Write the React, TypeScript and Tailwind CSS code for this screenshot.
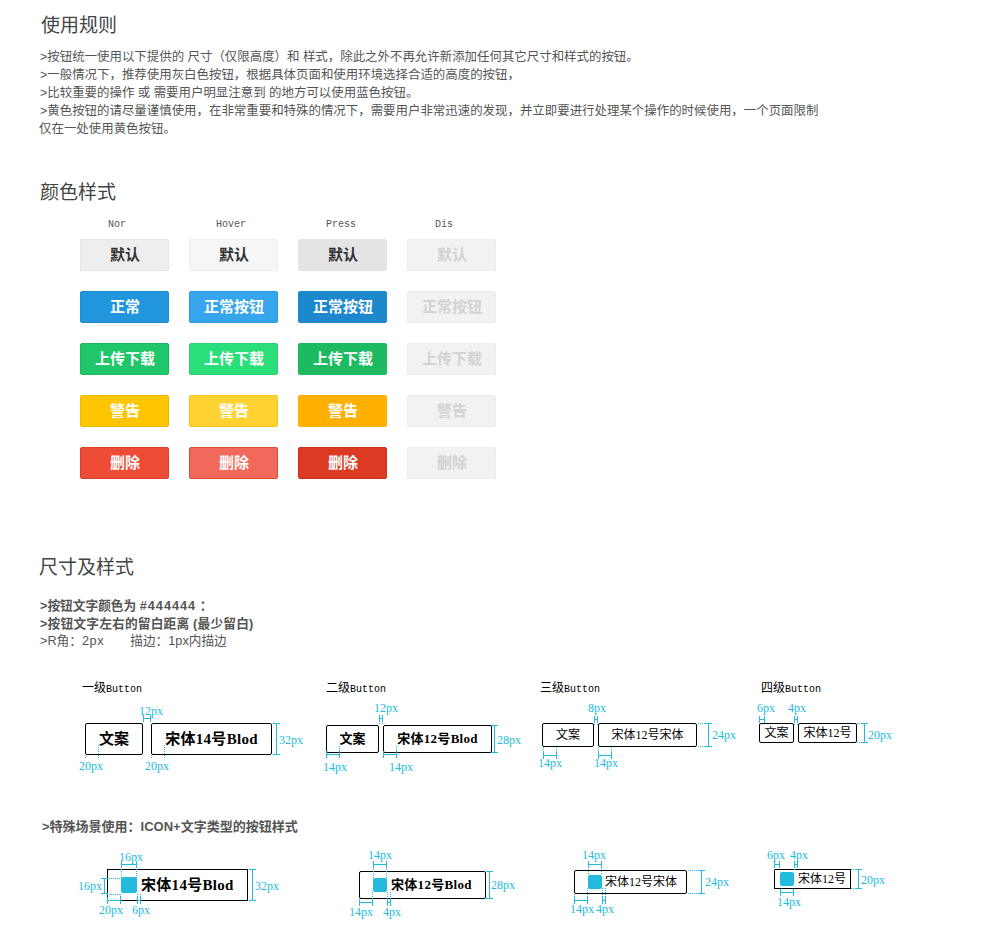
const SANS = "font-['Liberation_Sans','Noto_Sans_CJK_SC',sans-serif]";
const SPEC = "font-['Liberation_Serif','Noto_Sans_CJK_SC',serif]";

const DIS = "bg-[#f2f2f2] border-[#ececec] text-[#d2d2d2]";

const ROWS = [
  {
    text: ["默认", "默认", "默认", "默认"],
    cls: [
      "bg-[#eeeeee] border-[#e5e5e5] text-[#333333]",
      "bg-[#f6f6f6] border-[#eeeeee] text-[#333333]",
      "bg-[#e4e4e4] border-[#e4e4e4] text-[#333333]",
    ],
  },
  {
    text: ["正常", "正常按钮", "正常按钮", "正常按钮"],
    cls: [
      "bg-[#2196dc] border-[#1e8bcc] text-white",
      "bg-[#37a5ec] border-[#2f98da] text-white",
      "bg-[#1e88cd] border-[#1e88cd] text-white",
    ],
  },
  {
    text: ["上传下载", "上传下载", "上传下载", "上传下载"],
    cls: [
      "bg-[#1fc76a] border-[#1bb55f] text-white",
      "bg-[#2adf7a] border-[#2ad070] text-white",
      "bg-[#1dba62] border-[#1dba62] text-white",
    ],
  },
  {
    text: ["警告", "警告", "警告", "警告"],
    cls: [
      "bg-[#ffc600] border-[#f0b800] text-white",
      "bg-[#ffd233] border-[#f8c41a] text-white",
      "bg-[#ffb000] border-[#ffb000] text-white",
    ],
  },
  {
    text: ["删除", "删除", "删除", "删除"],
    cls: [
      "bg-[#ee4c36] border-[#d93f2b] text-white",
      "bg-[#f0695a] border-[#dc4a3c] text-white",
      "bg-[#dc3a23] border-[#cc3320] text-white",
    ],
  },
];

// cyan size labels on the spec drawings: [text, left, top]
const DIMS: [string, string][] = [
  ["12px", "left-[139px] top-[704px]"],
  ["20px", "left-[79px] top-[759px]"],
  ["20px", "left-[145px] top-[759px]"],
  ["32px", "left-[279px] top-[733px]"],
  ["12px", "left-[374px] top-[701px]"],
  ["14px", "left-[323px] top-[760px]"],
  ["14px", "left-[389px] top-[760px]"],
  ["28px", "left-[497px] top-[733px]"],
  ["8px", "left-[588px] top-[701px]"],
  ["14px", "left-[538px] top-[756px]"],
  ["14px", "left-[594px] top-[756px]"],
  ["24px", "left-[712px] top-[728px]"],
  ["6px", "left-[757px] top-[701px]"],
  ["4px", "left-[788px] top-[701px]"],
  ["20px", "left-[868px] top-[728px]"],
  ["16px", "left-[119px] top-[850px]"],
  ["16px", "left-[78px] top-[879px]"],
  ["20px", "left-[99px] top-[903px]"],
  ["6px", "left-[132px] top-[903px]"],
  ["32px", "left-[255px] top-[879px]"],
  ["14px", "left-[368px] top-[848px]"],
  ["14px", "left-[349px] top-[905px]"],
  ["4px", "left-[383px] top-[905px]"],
  ["28px", "left-[491px] top-[878px]"],
  ["14px", "left-[582px] top-[848px]"],
  ["14px", "left-[570px] top-[902px]"],
  ["4px", "left-[596px] top-[902px]"],
  ["24px", "left-[705px] top-[875px]"],
  ["6px", "left-[767px] top-[848px]"],
  ["4px", "left-[790px] top-[848px]"],
  ["14px", "left-[777px] top-[895px]"],
  ["20px", "left-[861px] top-[873px]"],
];

function Title({ children, className }: { children: string; className: string }) {
  return <h2 className={`text-[19px] leading-[24px] font-normal text-[#444444] ${className}`}>{children}</h2>;
}

function ColorTable() {
  return (
    <div className="ml-[80px] mt-[8px] flex flex-col gap-[20px]">
      {ROWS.map((row, r) => (
        <div key={r} className="flex gap-[20px]">
          {row.text.map((t, i) => (
            <div
              key={i}
              className={`w-[89px] h-[32px] rounded-[2px] border flex items-center justify-center pt-px pl-px text-[15px] font-bold ${
                i === 3 ? DIS : row.cls[i]
              }`}
            >
              {t}
            </div>
          ))}
        </div>
      ))}
    </div>
  );
}

function SpecBtn({ className, children }: { className: string; children: React.ReactNode }) {
  return (
    <div className={`rounded-[2px] border border-black flex items-center justify-center shrink-0 text-black ${SPEC} ${className}`}>
      {children}
    </div>
  );
}

function Level({ label }: { label: string }) {
  return (
    <div className="h-[12px] text-[10px] leading-[12px] text-black whitespace-nowrap">
      <span className={`text-[12px] ${SANS}`}>{label}</span>
      <span className="font-['Liberation_Mono',monospace]">Button</span>
    </div>
  );
}

function H({ x1, x2, y }: { x1: number; x2: number; y: number }) {
  return <path d={`M${x1} ${y + 0.5}H${x2}M${x1 + 0.5} ${y - 3}V${y + 4}M${x2 - 0.5} ${y - 3}V${y + 4}`} />;
}

function V({ x, y1, y2 }: { x: number; y1: number; y2: number }) {
  return <path d={`M${x + 0.5} ${y1}V${y2}M${x - 3} ${y1 + 0.5}H${x + 4}M${x - 3} ${y2 - 0.5}H${x + 4}`} />;
}

function DotV({ x, y1, y2 }: { x: number; y1: number; y2: number }) {
  return <path strokeDasharray="1 1" d={`M${x + 0.5} ${y1}V${y2}`} />;
}

function DotH({ x1, x2, y }: { x1: number; x2: number; y: number }) {
  return <path strokeDasharray="1 1" d={`M${x1} ${y + 0.5}H${x2}`} />;
}

function Measures() {
  return (
    <svg
      className="absolute top-0 left-0 w-[1000px] h-[932px] pointer-events-none"
      viewBox="0 0 1000 932"
      fill="none"
      stroke="#22bbdd"
      strokeWidth="1"
      shapeRendering="crispEdges"
    >
      {/* plain buttons */}
      <H x1={143} x2={151} y={718} />
      <DotV x={85} y1={755} y2={758} />
      <DotV x={98} y1={745} y2={758} />
      <DotV x={151} y1={755} y2={758} />
      <DotV x={164} y1={745} y2={758} />
      <V x={276} y1={723} y2={755} />
      <H x1={379} x2={383} y={718} />
      <DotV x={379} y1={721} y2={725} />
      <DotV x={382} y1={721} y2={725} />
      <H x1={326} x2={340} y={754} />
      <DotV x={339} y1={746} y2={754} />
      <H x1={383} x2={397} y={754} />
      <DotV x={396} y1={746} y2={754} />
      <V x={494} y1={725} y2={753} />
      <H x1={594} x2={598} y={719} />
      <DotV x={594} y1={722} y2={725} />
      <DotV x={597} y1={722} y2={725} />
      <H x1={543} x2={557} y={755} />
      <DotV x={543} y1={747} y2={755} />
      <DotV x={556} y1={747} y2={755} />
      <H x1={598} x2={612} y={755} />
      <DotV x={598} y1={747} y2={755} />
      <DotV x={611} y1={747} y2={755} />
      <V x={708} y1={723} y2={747} />
      <DotH x1={698} x2={705} y={723} />
      <DotH x1={698} x2={705} y={746} />
      <H x1={759} x2={765} y={719} />
      <H x1={794} x2={798} y={719} />
      <DotV x={794} y1={722} y2={725} />
      <DotV x={797} y1={722} y2={725} />
      <V x={864} y1={723} y2={743} />
      <DotH x1={857} x2={862} y={723} />
      <DotH x1={857} x2={862} y={742} />

      {/* icon buttons */}
      <H x1={121} x2={137} y={864} />
      <DotV x={121} y1={867} y2={878} />
      <DotV x={136} y1={867} y2={878} />
      <V x={104} y1={878} y2={894} />
      <DotH x1={107} x2={121} y={878} />
      <DotH x1={107} x2={121} y={894} />
      <H x1={107} x2={121} y={900} />
      <DotV x={120} y1={894} y2={900} />
      <H x1={137} x2={141} y={900} />
      <DotV x={137} y1={894} y2={900} />
      <DotV x={140} y1={894} y2={900} />
      <V x={252} y1={869} y2={901} />
      <H x1={373} x2={387} y={864} />
      <DotV x={373} y1={867} y2={878} />
      <DotV x={386} y1={867} y2={878} />
      <H x1={359} x2={373} y={902} />
      <DotV x={372} y1={892} y2={902} />
      <H x1={387} x2={391} y={902} />
      <DotV x={387} y1={892} y2={900} />
      <DotV x={390} y1={892} y2={900} />
      <V x={489} y1={871} y2={899} />
      <H x1={588} x2={602} y={864} />
      <DotV x={588} y1={867} y2={874} />
      <DotV x={601} y1={867} y2={874} />
      <H x1={574} x2={588} y={900} />
      <DotV x={574} y1={894} y2={900} />
      <DotV x={587} y1={888} y2={900} />
      <H x1={602} x2={606} y={900} />
      <DotV x={602} y1={888} y2={900} />
      <DotV x={605} y1={888} y2={900} />
      <V x={701} y1={870} y2={894} />
      <DotH x1={688} x2={698} y={870} />
      <DotH x1={688} x2={698} y={893} />
      <H x1={774} x2={780} y={864} />
      <DotV x={774} y1={867} y2={870} />
      <H x1={794} x2={798} y={864} />
      <DotV x={794} y1={867} y2={870} />
      <H x1={780} x2={794} y={892} />
      <V x={858} y1={869} y2={889} />
      <DotH x1={851} x2={856} y={869} />
      <DotH x1={851} x2={856} y={888} />
    </svg>
  );
}

function Icon({ className }: { className: string }) {
  return <span className={`block rounded-[2px] bg-[#22bbdd] shrink-0 ${className}`} />;
}

export default function App() {
  return (
    <div className={`relative w-[1000px] h-[932px] bg-white overflow-hidden ${SANS}`}>
      {/* rules */}
      <Title className="ml-[41px] pt-[14px]">使用规则</Title>
      <div className="ml-[40px] mt-[10px] text-[12.44px] leading-[18px] text-[#555555]">
        <p className="whitespace-nowrap">&gt;按钮统一使用以下提供的 尺寸（仅限高度）和 样式，除此之外不再允许新添加任何其它尺寸和样式的按钮。</p>
        <p className="whitespace-nowrap">&gt;一般情况下，推荐使用灰白色按钮，根据具体页面和使用环境选择合适的高度的按钮，</p>
        <p className="whitespace-nowrap">&gt;比较重要的操作 或 需要用户明显注意到 的地方可以使用蓝色按钮。</p>
        <p className="whitespace-nowrap">&gt;黄色按钮的请尽量谨慎使用，在非常重要和特殊的情况下，需要用户非常迅速的发现，并立即要进行处理某个操作的时候使用，一个页面限制</p>
        <p className="whitespace-nowrap -ml-px">仅在一处使用黄色按钮。</p>
      </div>

      {/* colours */}
      <Title className="ml-[40px] mt-[43px]">颜色样式</Title>
      <div className="ml-[80px] mt-[14px] flex text-[10px] leading-[12px] text-[#555555] font-['Liberation_Mono',monospace]">
        <span className="w-[109px] pl-[28px]">Nor</span>
        <span className="w-[109px] pl-[27px]">Hover</span>
        <span className="w-[109px] pl-[28px]">Press</span>
        <span className="pl-[28px]">Dis</span>
      </div>
      <ColorTable />

      {/* sizes */}
      <Title className="ml-[39px] mt-[77px]">尺寸及样式</Title>
      <div className="ml-[40px] mt-[18px] text-[12.7px] leading-[17.5px] text-[#555555] whitespace-nowrap">
        <p className="font-bold">&gt;按钮文字颜色为 <span className="tracking-[1px]">#444444</span> ：</p>
        <p className="font-bold tracking-[0.2px]">&gt;按钮文字左右的留白距离 (最少留白)</p>
        <p>&gt;R角：<span className="tracking-[0.6px]">2px</span><span className="ml-[26px]">描边：1px内描边</span></p>
      </div>

      <div className="ml-[82px] mt-[31.5px] flex">
        <div className="w-[244px] flex flex-col">
          <Level label="一级" />
          <div className="ml-[3px] mt-[29px] flex gap-[8px]">
            <SpecBtn className="w-[58px] h-[32px] text-[15px] font-bold">文案</SpecBtn>
            <SpecBtn className="w-[121px] h-[32px] text-[15px] font-bold tracking-[0.3px]">宋体14号Blod</SpecBtn>
          </div>
        </div>
        <div className="w-[214px] flex flex-col">
          <Level label="二级" />
          <div className="mt-[31px] flex gap-[4px]">
            <SpecBtn className="w-[53px] h-[28px] text-[13px] font-bold">文案</SpecBtn>
            <SpecBtn className="w-[109px] h-[28px] text-[13px] font-bold tracking-[0.3px]">宋体12号Blod</SpecBtn>
          </div>
        </div>
        <div className="w-[221px] flex flex-col">
          <Level label="三级" />
          <div className="ml-[2px] mt-[29px] flex gap-[4px]">
            <SpecBtn className="w-[52px] h-[24px] text-[12px]">文案</SpecBtn>
            <SpecBtn className="w-[99px] h-[24px] text-[12px]">宋体12号宋体</SpecBtn>
          </div>
        </div>
        <div className="flex flex-col">
          <Level label="四级" />
          <div className="-ml-[2px] mt-[29px] flex gap-[4px]">
            <SpecBtn className="w-[35px] h-[20px] text-[12px]">文案</SpecBtn>
            <SpecBtn className="w-[59px] h-[20px] text-[12px]">宋体12号</SpecBtn>
          </div>
        </div>
      </div>

      <p className="ml-[42px] mt-[64px] text-[13px] leading-[16px] font-bold text-[#555555] whitespace-nowrap">
        &gt;特殊场景使用：ICON+文字类型的按钮样式
      </p>

      <div className="ml-[107px] mt-[34px] flex items-start">
        <SpecBtn className="w-[141px] h-[32px] text-[15px] font-bold !justify-start pl-[13px] gap-[4px] !rounded-none tracking-[0.3px]">
          <Icon className="w-[16px] h-[16px]" />
          宋体14号Blod
        </SpecBtn>
        <SpecBtn className="ml-[111px] mt-[2px] w-[127px] h-[28px] text-[13px] font-bold !justify-start pl-[13px] gap-[4px] tracking-[0.3px]">
          <Icon className="w-[14px] h-[14px]" />
          宋体12号Blod
        </SpecBtn>
        <SpecBtn className="ml-[88px] mt-[1px] w-[113px] h-[24px] text-[12px] !justify-start pl-[13px] gap-[3px]">
          <Icon className="w-[14px] h-[14px]" />
          宋体12号宋体
        </SpecBtn>
        <SpecBtn className="ml-[87px] w-[77px] h-[20px] text-[12px] !justify-start pl-[5px] gap-[4px] !rounded-none">
          <Icon className="w-[14px] h-[14px]" />
          宋体12号
        </SpecBtn>
      </div>

      {/* size annotations drawn over the spec buttons */}
      <Measures />
      {DIMS.map(([text, place], i) => (
        <div key={i} className={`absolute ${SPEC} text-[12px] leading-[14px] text-[#22bbdd] ${place}`}>
          {text}
        </div>
      ))}
    </div>
  );
}
